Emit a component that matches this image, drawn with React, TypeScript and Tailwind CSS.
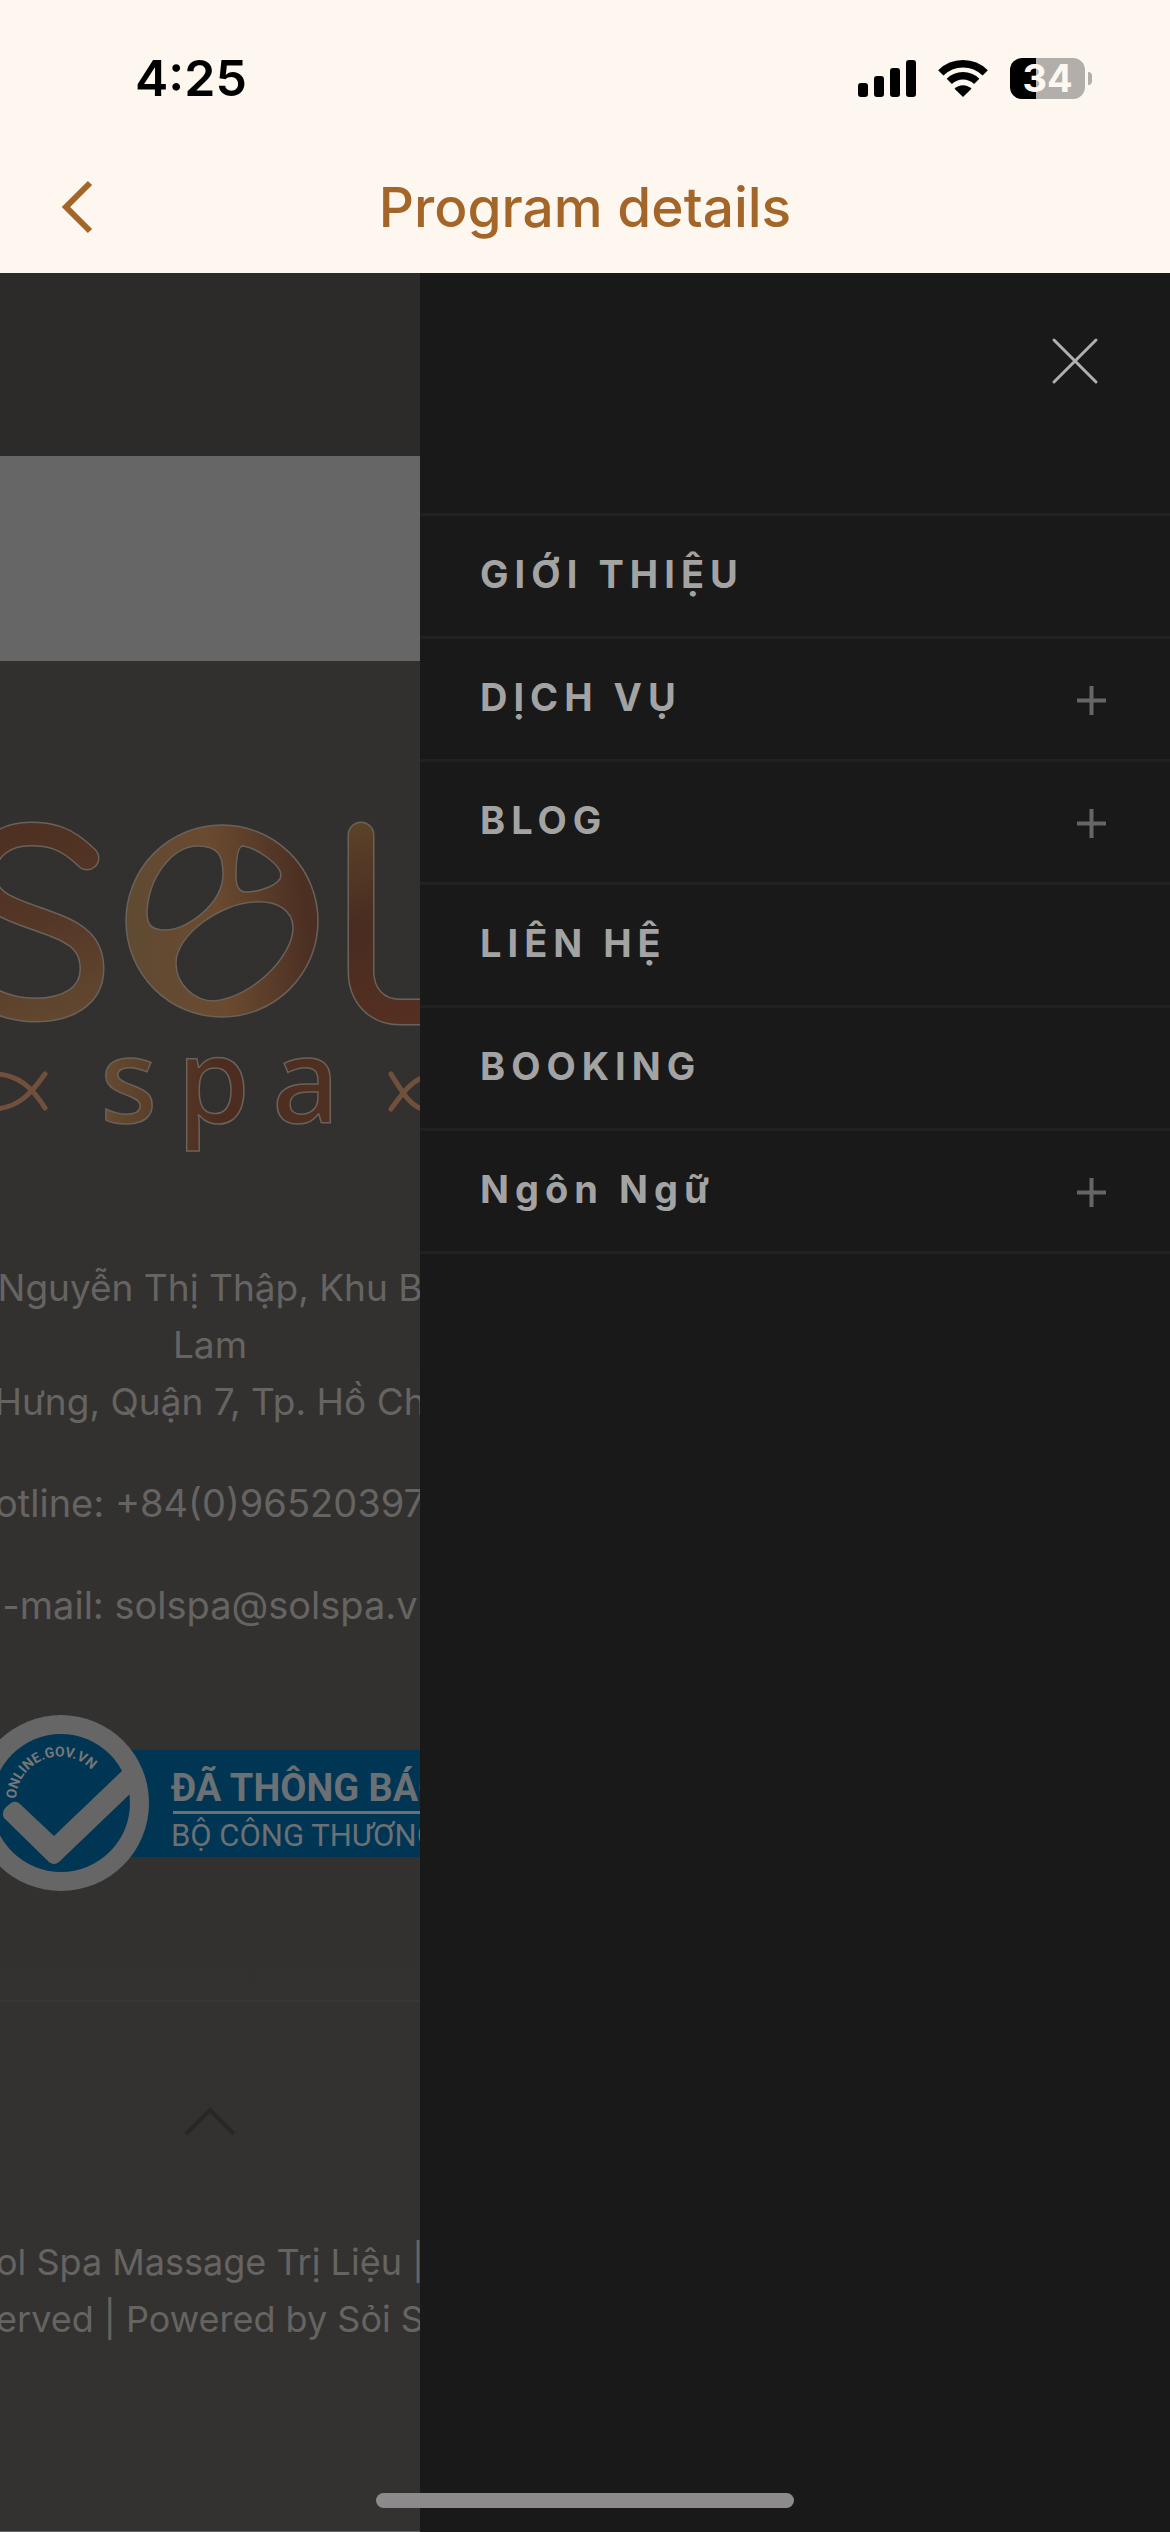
import React, { Fragment, ReactNode } from 'react'

interface MenuEntry {
  label: string
  expandable?: boolean
}

const menu: MenuEntry[] = [
  { label: 'GIỚI THIỆU' },
  { label: 'DỊCH VỤ', expandable: true },
  { label: 'BLOG', expandable: true },
  { label: 'LIÊN HỆ' },
  { label: 'BOOKING' },
  { label: 'Ngôn Ngữ', expandable: true },
]

function StatusBar() {
  return (
    <div className="flex h-[156px] items-center justify-between pl-[135px] pr-[78px] text-black">
      <div className="font-['Inter',sans-serif] text-[50px] font-semibold leading-none">4:25</div>
      <div className="flex items-center">
        <svg width="58" height="38" viewBox="0 0 58 38" fill="currentColor" aria-hidden="true">
          <rect x="0" y="24" width="10" height="14" rx="3" />
          <rect x="16" y="17" width="10" height="21" rx="3" />
          <rect x="32" y="9" width="10" height="29" rx="3" />
          <rect x="48" y="1" width="10" height="37" rx="3" />
        </svg>
        <svg className="ml-[22px]" width="50" height="38" viewBox="0 0 50 38" fill="none" stroke="currentColor" aria-hidden="true">
          <path d="M2.800 13.800A31.500 31.500 0 0 1 47.200 13.800" strokeWidth="7.500" />
          <path d="M11.300 22.400A19.500 19.500 0 0 1 38.700 22.400" strokeWidth="7.500" />
          <path d="M25 38L16.500 29.800A12 12 0 0 1 33.500 29.800Z" fill="currentColor" stroke="none" />
        </svg>
        <div className="ml-[22px] flex h-[41px] w-[75px] items-center justify-center rounded-[12px] bg-[linear-gradient(90deg,#000_35%,#b2aeaa_35%)] font-['Inter',sans-serif] text-[38px] font-bold leading-none text-[#fdf7f0]">
          34
        </div>
        <div className="ml-[3px] h-[13px] w-[4px] rounded-r-full bg-[#b2aeaa]" />
      </div>
    </div>
  )
}

function TitleBar() {
  return (
    <div className="grid h-[117px] grid-cols-[1fr_auto_1fr] items-center pb-[16px] text-[#a36628]">
      <button type="button" aria-label="Back" className="ml-[60px] w-[36px]">
        <svg width="36" height="54" viewBox="0 0 36 54" fill="none" stroke="currentColor" strokeWidth="6">
          <path d="M30 3L6 27L30 51" />
        </svg>
      </button>
      <h1 className="font-['Inter',sans-serif] text-[55px] font-medium leading-[64px]">Program details</h1>
    </div>
  )
}

function SolLogo() {
  return (
    <svg className="block w-full" viewBox="0 0 420 400" fill="none" role="img" aria-label="Sol spa">
      <defs>
        <linearGradient id="letterS" x1="0" y1="40" x2="60" y2="240" gradientUnits="userSpaceOnUse">
          <stop offset="0" stopColor="#4e3022" />
          <stop offset="0.5" stopColor="#543626" />
          <stop offset="1" stopColor="#624830" />
        </linearGradient>
        <linearGradient id="stone" x1="130" y1="180" x2="310" y2="160" gradientUnits="userSpaceOnUse">
          <stop offset="0" stopColor="#604a33" />
          <stop offset="0.5" stopColor="#6a4a30" />
          <stop offset="1" stopColor="#4b2f22" />
        </linearGradient>
        <linearGradient id="letterL" x1="350" y1="40" x2="400" y2="240" gradientUnits="userSpaceOnUse">
          <stop offset="0" stopColor="#5c4329" />
          <stop offset="0.5" stopColor="#482d20" />
          <stop offset="1" stopColor="#552f20" />
        </linearGradient>
        <linearGradient id="spaWord" x1="105" y1="0" x2="335" y2="0" gradientUnits="userSpaceOnUse">
          <stop offset="0" stopColor="#654b31" />
          <stop offset="0.5" stopColor="#4c2c1f" />
          <stop offset="1" stopColor="#4f3021" />
        </linearGradient>
      </defs>
      <g strokeLinecap="round" strokeLinejoin="round">
        <path d="M87 77C65 55 48 53 30 53C8 53 -16 65 -16 94C-16 126 22 131 54 144C78 153 92 164 92 188C92 216 66 229 36 229C8 229 -14 218 -28 205" stroke="#6a625a" strokeWidth="25" />
        <path d="M87 77C65 55 48 53 30 53C8 53 -16 65 -16 94C-16 126 22 131 54 144C78 153 92 164 92 188C92 216 66 229 36 229C8 229 -14 218 -28 205" stroke="url(#letterS)" strokeWidth="22" />
        <path d="M361 54V190C361 214 376 231 400 231H440" stroke="#6a625a" strokeWidth="27" />
        <path d="M361 54V190C361 214 376 231 400 231H440" stroke="url(#letterL)" strokeWidth="24" />
      </g>
      <path
        fillRule="evenodd"
        fill="url(#stone)"
        stroke="#6a625a"
        strokeWidth="1.500"
        d="M222 44A96 96 0 1 1 222 236A96 96 0 1 1 222 44Z M198 65C172 65 148 97 147 132C147 145 153 149 165 149C188 149 223 122 223 93C223 76 219 65 198 65Z M243 65C257 67 281 84 281 94C281 104 259 111 246 111C239 111 236 106 236 95C236 78 238 65 243 65Z M253 121C220 123 176 154 176 182C176 204 195 220 214 220C253 216 293 175 293 147C293 130 278 119 253 121Z"
      />
      <g fill="url(#spaWord)" stroke="#6a625a" strokeWidth="1.500" className="font-['Noto_Sans',sans-serif] text-[118px] font-medium">
        <text x="100" y="342">s</text>
        <text x="177" y="342">p</text>
        <text x="272" y="342">a</text>
      </g>
      <g stroke="#70503c" strokeWidth="5" strokeLinecap="round">
        <path d="M-4 293C18 294 32 306 45 327M-4 328C18 326 30 314 45 293" />
        <path d="M391 293C404 314 410 324 424 329M391 328C404 310 412 300 424 296" />
      </g>
    </svg>
  )
}

function GovBadge() {
  return (
    <svg className="block w-full" viewBox="0 0 420 180" role="img" aria-label="Đã thông báo Bộ Công Thương">
      <rect x="100" y="36" width="320" height="107" fill="#003653" />
      <circle cx="61" cy="89" r="88" fill="#666" />
      <circle cx="61" cy="89" r="69" fill="#003653" />
      <path d="M4 104Q1 98 6 93L11 89Q16 86 20 90L54 122L123 56L132 78L59 148Q54 152 49 148Z" fill="#666" />
      <path id="domainArc" d="M16 85A44 44 0 0 1 104 88" fill="none" />
      <text fill="#777" className="font-['Roboto',sans-serif] text-[14px] font-bold">
        <textPath href="#domainArc">ONLINE.GOV.VN</textPath>
      </text>
      <g fill="#6b7074">
        <text x="171" y="87" className="font-['Roboto',sans-serif] text-[38px] font-bold">ĐÃ THÔNG BÁO</text>
        <rect x="173" y="97" width="247" height="3" />
        <text x="171" y="132" className="font-['Roboto',sans-serif] text-[31px]">BỘ CÔNG THƯƠNG</text>
      </g>
    </svg>
  )
}

function Line({ children }: { children: ReactNode }) {
  return <div className="flex justify-center whitespace-nowrap">{children}</div>
}

function DimmedPage() {
  return (
    <div className="flex flex-col overflow-hidden border-b border-[#666] bg-linear-to-b from-[#32302e] to-[#343230] font-['Inter',sans-serif] text-[38px] leading-[57px] text-[#666462]">
      <div className="h-[183px] bg-[#2d2b2a]" />
      <div className="h-[205px] bg-[#666]" />
      <div className="pt-[120px]">
        <SolLogo />
      </div>
      <div className="pt-[78px] text-[37px]">
        <Line>Nguyễn Thị Thập, Khu B</Line>
        <Line>Lam</Line>
        <Line>Hưng, Quận 7, Tp. Hồ Ch</Line>
      </div>
      <div className="pt-[45px]">
        <Line>otline: +84(0)96520397</Line>
      </div>
      <div className="pt-[45px]">
        <Line>-mail: solspa@solspa.v</Line>
      </div>
      <div className="pt-[80px]">
        <GovBadge />
      </div>
      <div className="mt-[106px] border-t-2 border-[#393735]" />
      <a href="#top" aria-label="Back to top" className="mx-auto mt-[104px]">
        <svg width="52" height="32" viewBox="0 0 52 32" fill="none" stroke="#272726" strokeWidth="4">
          <path d="M2 28L26 4L50 28" />
        </svg>
      </a>
      <div className="pt-[96px] text-[36px]">
        <Line>ol Spa Massage Trị Liệu |</Line>
        <Line>erved | Powered by Sỏi S</Line>
      </div>
    </div>
  )
}

function Drawer() {
  return (
    <aside className="bg-[#191919]">
      <div className="flex h-[240px] justify-end pr-[71px] pt-[64px]">
        <button type="button" aria-label="Close menu" className="size-[48px]">
          <svg width="48" height="48" viewBox="0 0 48 48" fill="none" stroke="#b0b0b0" strokeWidth="3" strokeLinecap="round">
            <path d="M3 3L45 45M45 3L3 45" />
          </svg>
        </button>
      </div>
      <nav className="border-t-3 border-[#212121]">
        {menu.map(({ label, expandable }) => (
          <div key={label} className="flex h-[123px] items-center justify-between border-b-3 border-[#212121] pb-[4px] pl-[60px] pr-[64px]">
            <a href="#menu" className="font-['Inter',sans-serif] text-[38px] font-bold tracking-[6px] text-[#a3a3a3]">{label}</a>
            {expandable ? (
              <button type="button" aria-label={`Open ${label}`} className="mt-[6px]">
                <svg width="29" height="29" viewBox="0 0 29 29" stroke="#666" strokeWidth="4">
                  <path d="M14.500 0V29M0 14.500H29" />
                </svg>
              </button>
            ) : null}
          </div>
        ))}
      </nav>
    </aside>
  )
}

export default function App() {
  return (
    <Fragment>
      <div className="flex min-h-screen flex-col bg-[#fdf7f0]">
        <header>
          <StatusBar />
          <TitleBar />
        </header>
        <main className="grid flex-1 grid-cols-[14fr_25fr]">
          <DimmedPage />
          <Drawer />
        </main>
      </div>
      <div className="fixed inset-x-0 bottom-[24px] mx-auto h-[15px] w-[418px] rounded-full bg-[#8c8a8a]" />
    </Fragment>
  )
}
